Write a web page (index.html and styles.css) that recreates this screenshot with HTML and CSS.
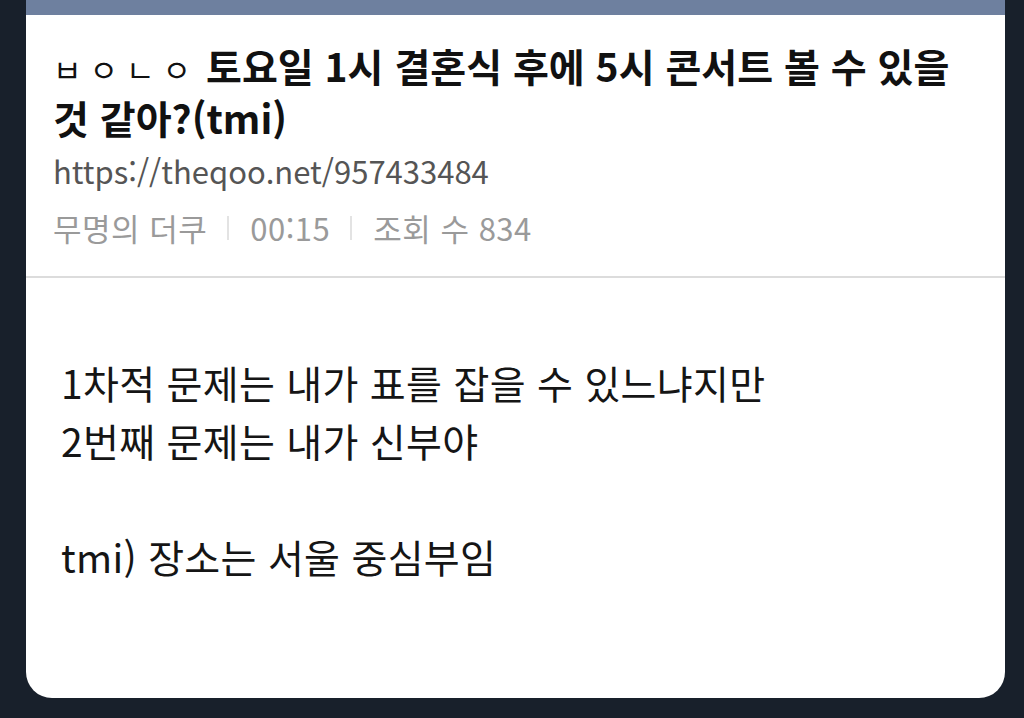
FILE: index.html
```html
<!DOCTYPE html>
<html lang="ko">
<head>
<meta charset="utf-8">
<link rel="stylesheet" href="styles.css">
</head>
<body>
<div class="card">
  <div class="topbar"></div>
  <div class="header">
    <h1 class="title"><span class="prefix">ㅂㅇㄴㅇ</span> 토요일 1시 결혼식 후에 5시 콘서트 볼 수 있을 것 같아?(tmi)</h1>
    <div class="url">https://theqoo.net/957433484</div>
    <div class="meta"><span>무명의 더쿠</span><span class="sep"></span><span>00:15</span><span class="sep"></span><span>조회 수 834</span></div>
  </div>
  <div class="content">
    <p>1차적 문제는 내가 표를 잡을 수 있느냐지만</p>
    <p>2번째 문제는 내가 신부야</p>
    <p class="blank">&nbsp;</p>
    <p>tmi) 장소는 서울 중심부임</p>
  </div>
</div>
</body>
</html>
```
FILE: styles.css
```css
html, body {
  margin: 0;
  padding: 0;
  background: #18202b;
}
body {
  width: 1024px;
  height: 718px;
  overflow: hidden;
  font-family: "Noto Sans CJK KR", "Noto Sans", sans-serif;
}
.card {
  margin-left: 26px;
  width: 979px;
  height: 698px;
  background: #ffffff;
  border-radius: 0 0 26px 26px;
  overflow: hidden;
  display: flex;
  flex-direction: column;
}
.topbar {
  height: 15px;
  background: #6e809f;
  flex: none;
}
.header {
  flex: none;
  height: 263px;
  box-sizing: border-box;
  padding: 26px 30px 0 27px;
  border-bottom: 2px solid #dcdcdc;
}
.title {
  margin: 0;
  max-width: 900px;
  font-size: 39px;
  line-height: 48px;
  font-weight: 700;
  color: #111;
  letter-spacing: 0;
}
.prefix {
  font-weight: 400;
  letter-spacing: 8px;
  font-size: 31px;
  margin-right: -4px;
}
.url {
  margin-top: 10px;
  font-size: 31px;
  line-height: 40px;
  color: #555;
}
.meta {
  margin-top: 17px;
  font-size: 31px;
  line-height: 40px;
  color: #9a9a9a;
  letter-spacing: 0.5px;
  display: flex;
  align-items: center;
  white-space: pre;
}
.sep {
  display: inline-block;
  width: 2px;
  height: 24px;
  background: #e3e3e3;
  margin: 0 21px 0 20px;
}
.content {
  flex: 1;
  padding: 75px 30px 0 35px;
}
.content p {
  margin: 0;
  font-size: 39px;
  line-height: 58px;
  color: #151515;
  letter-spacing: 0.3px;
}
```
